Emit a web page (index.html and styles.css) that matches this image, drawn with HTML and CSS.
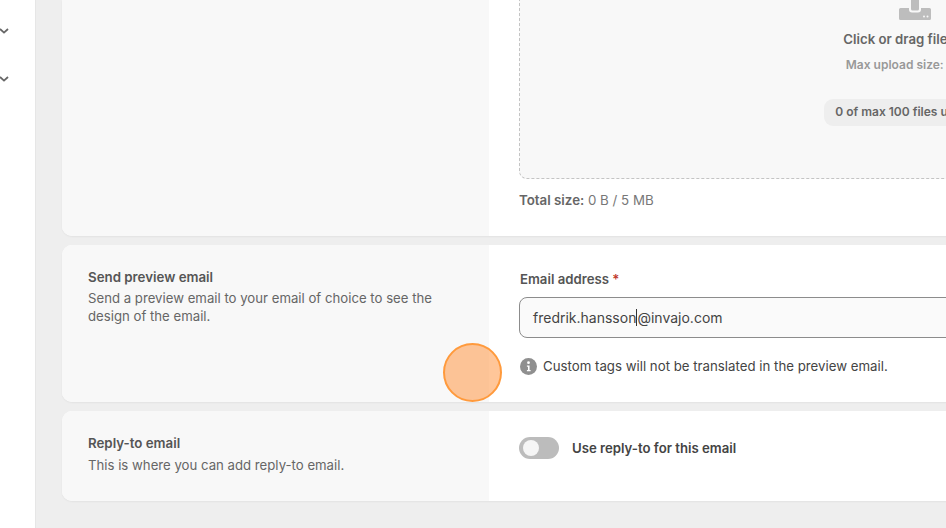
FILE: index.html
```html
<!DOCTYPE html>
<html lang="en">
<head>
<meta charset="utf-8">
<title>Send preview email</title>
<link rel="stylesheet" href="styles.css">
</head>
<body>
<div class="app">
  <aside class="sidebar">
    <svg class="chev" viewBox="0 0 10 6" width="10" height="6"><path d="M1 1l4 3.6L9 1" fill="none" stroke="#666" stroke-width="1.8"/></svg>
    <svg class="chev" viewBox="0 0 10 6" width="10" height="6"><path d="M1 1l4 3.6L9 1" fill="none" stroke="#666" stroke-width="1.8"/></svg>
  </aside>
  <main class="main">
    <section class="card card-upload">
      <div class="side"></div>
      <div class="body">
        <div class="dropzone">
          <svg class="upload-icon" viewBox="0 0 34 24" width="34" height="24"><path d="M1 13.5a1.5 1.5 0 0 1 1.5-1.5H11v1.5a3 3 0 0 0 3 3h6a3 3 0 0 0 3-3V12h8.5a1.500 1.500 0 0 1 1.500 1.500V22.500a1.500 1.500 0 0 1-1.500 1.500H2.500A1.500 1.500 0 0 1 1 22.500z" fill="#bdbdbd"/><rect x="13" y="0" width="8" height="14.500" rx="1.500" fill="#bdbdbd"/><circle cx="26" cy="20.500" r="1" fill="#f8f8f8"/><circle cx="29.500" cy="20.500" r="1" fill="#f8f8f8"/></svg>
          <p class="drop-title">Click or drag files here</p>
          <p class="drop-sub">Max upload size: 5 MB</p>
          <span class="pill">0 of max 100 files uploaded</span>
        </div>
        <p class="total"><b>Total size:</b> 0 B / 5 MB</p>
      </div>
    </section>
    <section class="card card-preview">
      <div class="side">
        <h2>Send preview email</h2>
        <p>Send a preview email to your email of choice to see the design of the email.</p>
      </div>
      <div class="body">
        <label class="label">Email address <span class="req">*</span></label>
        <div class="input">fredrik.hansson<span class="caret"></span>@invajo.com</div>
        <div class="note">
          <svg viewBox="0 0 16 16" width="17" height="17"><circle cx="8" cy="8" r="8" fill="#8f8f8f"/><circle cx="8" cy="4.400" r="1.300" fill="#fff"/><path d="M6.500 7h2.500v4.300h1v1.200H6.500v-1.200h1V8.200h-1z" fill="#fff"/></svg>
          <span>Custom tags will not be translated in the preview email.</span>
        </div>
      </div>
    </section>
    <section class="card card-reply">
      <div class="side">
        <h2>Reply-to email</h2>
        <p>This is where you can add reply-to email.</p>
      </div>
      <div class="body reply-body">
        <span class="toggle"><span class="knob"></span></span>
        <span class="toggle-label">Use reply-to for this email</span>
      </div>
    </section>
  </main>
</div>
<div class="click-marker"></div>
</body>
</html>
```

FILE: styles.css
```css
* { box-sizing: border-box; }
html, body { margin: 0; height: 100%; overflow: hidden; }
body { font-family: Inter, "Liberation Sans", sans-serif; background: #eeeeee; color: #555; }
.app { display: flex; width: 946px; height: 528px; overflow: hidden; }
.sidebar { flex: 0 0 36px; background: #fff; border-right: 1px solid #e6e6e6; padding-top: 28px; display: flex; flex-direction: column; gap: 42px; overflow: hidden; }
.chev { display: block; margin-left: -1px; }
.main { flex: 0 0 auto; width: 1290px; padding: 0 0 0 26px; display: flex; flex-direction: column; gap: 9px; }
.card { display: flex; background: #fff; border-radius: 0 0 10px 10px; box-shadow: 0 1px 2px rgba(0,0,0,.05); overflow: hidden; }
.card-preview, .card-reply { border-radius: 10px; }
.card-upload { height: 236px; }
.card-preview { height: 157px; }
.card-reply { height: 90px; }
.side { flex: 0 0 426.500px; background: #f8f8f8; padding: 24px 26px; }
.side h2 { margin: 0 0 4px; font-size: 13.300px; line-height: 16px; font-weight: 600; color: #555; }
.card-reply .side h2 { margin-bottom: 5px; }
.side p { margin: 0; font-size: 13.200px; line-height: 18px; color: #666; }
.body { flex: 1; padding: 0 0 0 30.500px; }
.dropzone { width: 792px; height: 179px; background: #f8f8f8; border: 1px dashed #c4c4c4; border-top: 0; border-radius: 0 0 8px 8px; display: flex; flex-direction: column; align-items: center; }
.upload-icon { display: block; margin-top: -4px; }
.drop-title { margin: 11px 0 0; font-size: 13.200px; line-height: 16px; font-weight: 600; color: #666; white-space: nowrap; }
.drop-sub { margin: 10px 0 0; padding-right: 8px; font-size: 12px; line-height: 15px; font-weight: 600; color: #999; white-space: nowrap; }
.pill { margin-top: 27px; height: 27px; padding: 0 11px; border-radius: 9px; background: #eeeeee; font-size: 12px; line-height: 25px; font-weight: 600; color: #666; white-space: nowrap; }
.total { margin: 13px 0 0; font-size: 13.300px; line-height: 16px; color: #777; }
.total b { font-weight: 600; color: #666; }
.card-preview .body { padding-top: 26px; }
.label { display: block; padding-left: 1px; font-size: 13.200px; line-height: 16px; font-weight: 600; color: #555; }
.req { color: #c0392b; }
.input { display: flex; align-items: center; margin-top: 10px; height: 41px; width: 790px; padding: 0 13px 1px; border: 1px solid #8c8c8c; border-radius: 8px; background: #fafafa; font-size: 14px; color: #444; }
.caret { display: inline-block; width: 1px; height: 17px; background: #333; }
.note { display: flex; align-items: center; gap: 6px; margin-top: 20px; padding-left: 1px; font-size: 13.250px; line-height: 17px; color: #444; }
.note svg { flex: none; }
.reply-body { display: flex; align-items: center; gap: 13px; padding-bottom: 16px; }
.toggle { display: block; width: 40px; height: 22px; border-radius: 11px; background: #bcbcbc; padding: 3px 0 0 4px; }
.knob { display: block; width: 16px; height: 16px; border-radius: 50%; background: #f5f5f5; }
.toggle-label { font-size: 13.200px; line-height: 16px; font-weight: 600; color: #444; }
.click-marker { position: absolute; left: 442.500px; top: 342.500px; width: 59px; height: 59px; border-radius: 50%; border: 2.500px solid #ff9a3c; background: rgba(255, 152, 70, .55); }
```
